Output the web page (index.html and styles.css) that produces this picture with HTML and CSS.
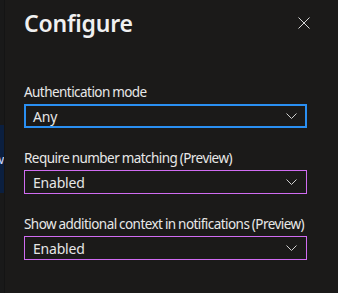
FILE: index.html
```html
<!DOCTYPE html>
<html lang="en">
<head>
  <meta charset="UTF-8">
  <meta name="viewport" content="width=device-width, initial-scale=1.0">
  <title>Configure</title>
  <link rel="stylesheet" href="styles.css">
</head>
<body>
  <div class="page">
    <div class="side">
      <div class="side-item">w</div>
    </div>
    <div class="panel">
      <div class="header">
        <h2>Configure</h2>
        <button class="close" aria-label="Close">
          <svg width="12" height="12" viewBox="0 0 12 12"><path d="M0.5 0.5 L11.5 11.5 M11.5 0.5 L0.5 11.5" stroke="#d6d6d6" stroke-width="1" fill="none"/></svg>
        </button>
      </div>

      <div class="form-group">
        <label>Authentication mode</label>
        <div class="select focus">
          <span>Any</span>
          <svg class="chev" width="11" height="6" viewBox="0 0 11 6"><path d="M0.5 0.5 L5.5 5.5 L10.5 0.5" stroke="#cfcfcf" stroke-width="1" fill="none"/></svg>
        </div>
      </div>

      <div class="form-group">
        <label>Require number matching (Preview)</label>
        <div class="select changed">
          <span>Enabled</span>
          <svg class="chev" width="11" height="6" viewBox="0 0 11 6"><path d="M0.5 0.5 L5.5 5.5 L10.5 0.5" stroke="#cfcfcf" stroke-width="1" fill="none"/></svg>
        </div>
      </div>

      <div class="form-group">
        <label>Show additional context in notifications (Preview)</label>
        <div class="select changed">
          <span>Enabled</span>
          <svg class="chev" width="11" height="6" viewBox="0 0 11 6"><path d="M0.5 0.5 L5.5 5.5 L10.5 0.5" stroke="#cfcfcf" stroke-width="1" fill="none"/></svg>
        </div>
      </div>
    </div>
  </div>
</body>
</html>
```

FILE: styles.css
```css
html, body {
  margin: 0;
  height: 100%;
}
body {
  font-family: "Noto Sans", "Open Sans", sans-serif;
  background: #1b1a19;
  color: #e6e6e6;
}
.page {
  display: flex;
  height: 100%;
}
.side {
  width: 4px;
  background: #191919;
  border-right: 1px solid #141414;
  flex-shrink: 0;
  overflow: hidden;
}
.side-item {
  margin-top: 125px;
  height: 68px;
  background: #0b1f3f;
  color: #cfd8ff;
  font-size: 13px;
  line-height: 68px;
  text-indent: -6px;
}
.panel {
  flex: 1;
  min-width: 0;
  padding: 7px 31px 0 19px;
}
.header {
  display: flex;
  align-items: center;
  justify-content: space-between;
  height: 32px;
  margin-bottom: 43px;
}
.header h2 {
  margin: 0;
  font-size: 23px;
  font-weight: 600;
  letter-spacing: -0.2px;
  color: #f0f0f0;
}
.close {
  background: none;
  border: none;
  padding: 0;
  margin-right: -3px;
  width: 12px;
  height: 12px;
  display: flex;
}
.form-group {
  margin-bottom: 20px;
}
.form-group label {
  display: block;
  font-size: 13.5px;
  line-height: 20px;
  letter-spacing: -0.55px;
  word-spacing: -0.5px;
  white-space: nowrap;
  margin-bottom: 2px;
  color: #e8e8e8;
}
.select {
  display: flex;
  align-items: center;
  justify-content: space-between;
  height: 24px;
  box-sizing: border-box;
  border: 1px solid #d06cf2;
  padding: 0 9px 0 8px;
  font-size: 14px;
  letter-spacing: -0.2px;
}
.select.focus {
  border: 2px solid #2a8ff2;
  padding: 0 8px 0 7px;
}
.chev {
  display: block;
}
```
